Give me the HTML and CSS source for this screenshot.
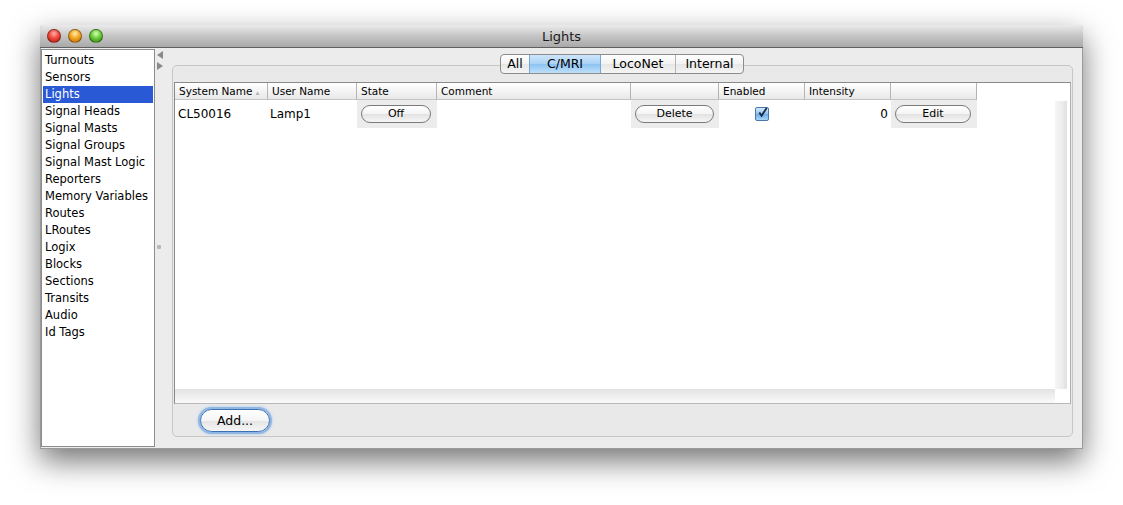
FILE: index.html
```html
<!DOCTYPE html>
<html>
<head>
<meta charset="utf-8">
<link rel="stylesheet" href="styles.css">
</head>
<body>
<div class="window">
  <div class="titlebar">
    <div class="lights">
      <span class="tl red"></span><span class="tl yellow"></span><span class="tl green"></span>
    </div>
    <div class="title">Lights</div>
  </div>
  <div class="main">
    <div class="listbox">
      <div class="item">Turnouts</div>
      <div class="item">Sensors</div>
      <div class="item sel">Lights</div>
      <div class="item">Signal Heads</div>
      <div class="item">Signal Masts</div>
      <div class="item">Signal Groups</div>
      <div class="item">Signal Mast Logic</div>
      <div class="item">Reporters</div>
      <div class="item">Memory Variables</div>
      <div class="item">Routes</div>
      <div class="item">LRoutes</div>
      <div class="item">Logix</div>
      <div class="item">Blocks</div>
      <div class="item">Sections</div>
      <div class="item">Transits</div>
      <div class="item">Audio</div>
      <div class="item">Id Tags</div>
    </div>
    <div class="splitter">
      <div class="arrows">
        <svg width="6" height="8" viewBox="0 0 6 8"><path d="M6 0 L0 4 L6 8 Z" fill="#8a8a8a"/></svg>
        <svg width="6" height="8" viewBox="0 0 6 8"><path d="M0 0 L6 4 L0 8 Z" fill="#8a8a8a"/></svg>
      </div>
      <div class="grip"></div>
    </div>
    <div class="right">
      <div class="tabs">
        <div class="tab t-all">All</div>
        <div class="tab t-cmri active">C/MRI</div>
        <div class="tab t-loco">LocoNet</div>
        <div class="tab t-int">Internal</div>
      </div>
      <div class="tabpane">
        <div class="scroll">
          <div class="thead">
            <div class="th c1">System Name <span class="sort">&#9652;</span></div>
            <div class="th c2">User Name</div>
            <div class="th c3">State</div>
            <div class="th c4">Comment</div>
            <div class="th c5"></div>
            <div class="th c6">Enabled</div>
            <div class="th c7">Intensity</div>
            <div class="th c8"></div>
          </div>
          <div class="tbody">
            <div class="rows">
              <div class="tr">
                <div class="td c1">CL50016</div>
                <div class="td c2">Lamp1</div>
                <div class="td c3 btncell"><span class="pill w70">Off</span></div>
                <div class="td c4"></div>
                <div class="td c5 btncell"><span class="pill w78">Delete</span></div>
                <div class="td c6 center">
                  <span class="check"><svg width="12" height="12" viewBox="0 0 12 12"><path d="M2.5 5.5 L5 9 L10.5 0.5" stroke="#1a2a44" stroke-width="2" fill="none"/></svg></span>
                </div>
                <div class="td c7 num">0</div>
                <div class="td c8 btncell"><span class="pill w76">Edit</span></div>
              </div>
            </div>
            <div class="vbar"></div>
          </div>
          <div class="hbar"><div class="hfill"></div><div class="corner"></div></div>
        </div>
        <div class="footer">
          <span class="addbtn">Add...</span>
        </div>
      </div>
    </div>
  </div>
</div>
</body>
</html>
```

FILE: styles.css
```css
html, body {
  margin: 0;
  padding: 0;
  background: #ffffff;
}
body {
  font-family: "DejaVu Sans", "Liberation Sans", sans-serif;
  color: #000;
  width: 1123px;
  height: 505px;
  overflow: hidden;
}
.window {
  margin-left: 40px;
  margin-top: 25px;
  width: 1043px;
  height: 424px;
  background: #ececec;
  box-shadow: 0 12px 30px rgba(0,0,0,0.55);
  border-radius: 4px 4px 0 0;
  display: flex;
  flex-direction: column;
  box-sizing: border-box;
  border: 1px solid #9a9a9a;
  border-top: none;
}
.titlebar {
  height: 22px;
  flex: none;
  background: linear-gradient(#ebebeb, #c5c5c5 50%, #a9a9a9);
  border-bottom: 1px solid #606060;
  border-radius: 4px 4px 0 0;
  position: relative;
  display: flex;
  align-items: center;
  justify-content: center;
  margin: 0 -1px;
}
.lights {
  position: absolute;
  left: 7px;
  top: 4px;
  display: flex;
  gap: 7px;
}
.tl {
  width: 14px;
  height: 14px;
  border-radius: 50%;
  box-sizing: border-box;
  border: 1px solid rgba(0,0,0,0.35);
}
.red { background: radial-gradient(circle at 50% 30%, #ffb0a8 0, #f04a3c 45%, #a81a10 100%); }
.yellow { background: radial-gradient(circle at 50% 30%, #fff0b0 0, #f5a623 45%, #b0660a 100%); }
.green { background: radial-gradient(circle at 50% 30%, #d8ffb8 0, #6ccd3a 45%, #2f7d12 100%); }
.title {
  font-size: 13px;
  color: #1a1a1a;
  padding-top: 1px;
}
.main {
  flex: 1;
  display: flex;
  padding: 1px 0 1px 0;
  min-height: 0;
}
.listbox {
  width: 114px;
  background: #fff;
  border: 1px solid #8c8c8c;
  box-sizing: border-box;
  padding: 2px 1px;
  flex: none;
}
.item {
  height: 17px;
  line-height: 17px;
  font-size: 11.5px;
  padding-left: 2px;
  white-space: nowrap;
}
.item.sel {
  background: #2a59d6;
  color: #fff;
}
.splitter {
  width: 17px;
  flex: none;
  position: relative;
}
.arrows {
  display: flex;
  flex-direction: column;
  gap: 3px;
  padding: 2px 0 0 2px;
}
.arrows svg { display: block; }
.grip {
  position: absolute;
  left: 2px;
  top: 196px;
  width: 4px;
  height: 4px;
  background: #b8b8b8;
  border-radius: 1px;
}
.right {
  width: 901px;
  flex: none;
  position: relative;
  padding-top: 16px;
}
.tabs {
  position: absolute;
  top: 5px;
  left: 328px;
  display: flex;
  height: 20px;
  box-sizing: border-box;
  border: 1px solid #8c8c8c;
  border-radius: 4px;
  overflow: hidden;
  z-index: 2;
  background: linear-gradient(#ffffff, #f2f2f2 50%, #e6e6e6 51%, #f5f5f5);
}
.tab {
  font-size: 12.5px;
  line-height: 18px;
  text-align: center;
  border-left: 1px solid #b4b4b4;
  box-sizing: border-box;
}
.tab:first-child { border-left: none; }
.t-all { width: 28px; }
.t-cmri { width: 71px; }
.t-loco { width: 75px; }
.t-int { width: 68px; }
.tab.active {
  background: linear-gradient(#cfe6fb, #a9d2f6 50%, #8cc3f2 51%, #bfe0fb);
  border-left-color: #7aa6cf;
}
.tab.active + .tab { border-left-color: #7aa6cf; }
.tabpane {
  width: 901px;
  height: 372px;
  box-sizing: border-box;
  border: 1px solid #c6c6c6;
  border-radius: 5px;
  background: #e9e9e9;
  padding: 16px 1px 0 1px;
  display: flex;
  flex-direction: column;
}
.scroll {
  height: 322px;
  box-sizing: border-box;
  border: 1px solid #8a8a8a;
  border-right-color: #b0b0b0;
  border-bottom-color: #b8b8b8;
  background: #fff;
  display: flex;
  flex-direction: column;
}
.thead {
  display: flex;
  height: 17px;
  flex: none;
}
.th {
  height: 17px;
  box-sizing: border-box;
  font-size: 10.5px;
  line-height: 17px;
  padding-left: 4px;
  background: linear-gradient(#ffffff, #f4f4f4 50%, #e8e8e8);
  border-right: 1px solid #b4b4b4;
  border-bottom: 1px solid #c4c4c4;
  white-space: nowrap;
  overflow: hidden;
}
.sort { font-size: 7px; color: #b0b0b0; }
.c1 { width: 93px; }
.c2 { width: 89px; }
.c3 { width: 80px; }
.c4 { width: 194px; }
.c5 { width: 88px; }
.c6 { width: 86px; }
.c7 { width: 86px; }
.c8 { width: 86px; }
.tbody {
  flex: 1;
  display: flex;
  min-height: 0;
}
.rows { flex: 1; }
.tr {
  display: flex;
  height: 28px;
}
.td {
  font-size: 12px;
  line-height: 29px;
  padding-left: 2px;
  box-sizing: border-box;
  white-space: nowrap;
}
.c1.td { padding-left: 3px; }
.btncell {
  background: #ececec;
  display: flex;
  align-items: center;
  padding-left: 4px;
}
.pill {
  display: inline-block;
  height: 18px;
  box-sizing: border-box;
  border: 1px solid #7a7a7a;
  border-radius: 9px;
  background: linear-gradient(#ffffff, #f4f4f4 50%, #e2e2e2 51%, #f6f6f6);
  font-size: 11px;
  line-height: 16px;
  text-align: center;
  margin-top: 0;
}
.w70 { width: 70px; }
.w78 { width: 79px; }
.w76 { width: 76px; }
.center {
  display: flex;
  justify-content: center;
  align-items: center;
  padding-left: 0;
}
.check {
  width: 14px;
  height: 14px;
  box-sizing: border-box;
  border: 1px solid #4a78a8;
  border-radius: 2px;
  background: linear-gradient(#d4ebfc, #8ec3ee 50%, #6aaee8 51%, #a8d6f8);
  margin-top: -1px;
  display: flex;
  align-items: center;
  justify-content: center;
  margin-left: 0;
}
.check svg { display: block; margin-top: -2px; margin-left: 1px; }
.num {
  text-align: right;
  padding-right: 3px;
}
.vbar {
  width: 12px;
  margin-right: 3px;
  margin-top: 1px;
  background: linear-gradient(90deg, #f6f6f6, #ececec 60%, #e0e0e0);
}
.hbar {
  height: 14px;
  display: flex;
  flex: none;
}
.hfill {
  flex: 1;
  background: linear-gradient(#e2e2e2, #efefef 50%, #fafafa);
}
.corner {
  width: 15px;
  background: #fff;
}
.footer {
  padding: 5px 0 0 26px;
}
.addbtn {
  display: inline-block;
  width: 70px;
  height: 23px;
  box-sizing: border-box;
  border: 1px solid #3d6fb3;
  border-radius: 12px;
  background: linear-gradient(#ffffff, #f4f4f4 50%, #e4e4e4 51%, #f6f6f6);
  box-shadow: 0 0 0 2px #8fb7e3, 0 0 3px 2px #a9c9ee;
  font-size: 12.5px;
  line-height: 21px;
  text-align: center;
}
```
